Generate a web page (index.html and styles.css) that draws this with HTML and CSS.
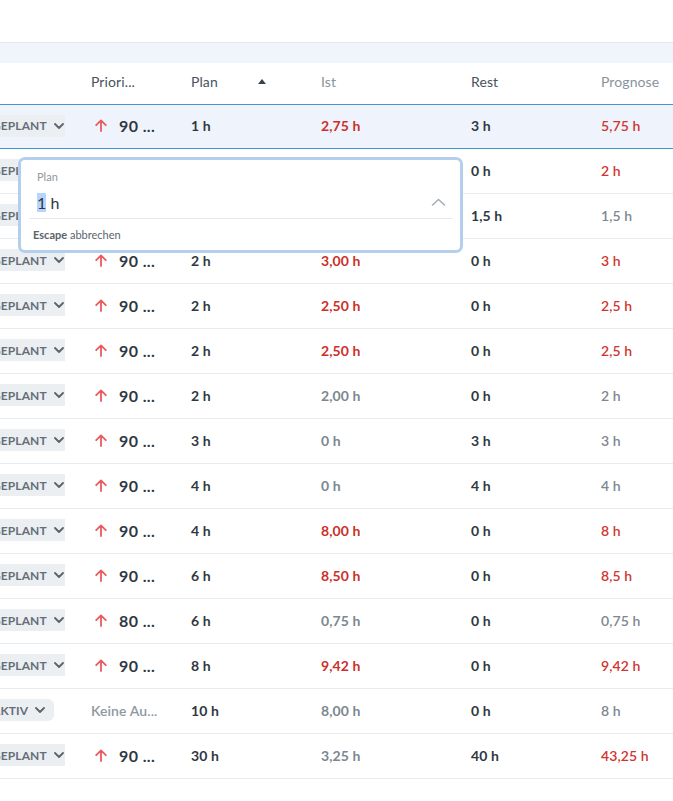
FILE: index.html
```html
<!DOCTYPE html>
<html lang="de">
<head>
<meta charset="utf-8">
<title>Tabelle</title>
<link rel="stylesheet" href="styles.css">
</head>
<body>
<div class="page">
  <div class="topbar"></div>
  <div class="band"></div>
  <div class="grid-wrap">
    <div class="grid">
      <div class="row head">
        <div class="cell status-h">Status</div>
        <div class="cell">Priori...</div>
        <div class="cell plan-h">Plan<svg class="sort" width="8" height="5" viewBox="0 0 8 5"><path d="M0 5 L4 0 L8 5 Z" fill="#3a434d"/></svg></div>
        <div class="cell light">Ist</div>
        <div class="cell">Rest</div>
        <div class="cell light">Prognose</div>
      </div>

      <div class="row sel">
        <div class="cell status"><span class="badge">GEPLANT<svg class="chev" width="10" height="6" viewBox="0 0 10 6"><path d="M1 1 L5 5 L9 1" fill="none" stroke="#59636d" stroke-width="1.8" stroke-linecap="round" stroke-linejoin="round"/></svg></span></div>
        <div class="cell prio"><svg class="up" width="12" height="13" viewBox="0 0 12 13"><path d="M6 12 V1.5 M1.2 6.2 L6 1.4 L10.8 6.2" fill="none" stroke="#ea5a5f" stroke-width="1.8" stroke-linecap="round" stroke-linejoin="round"/></svg><span class="pv">90 ...</span></div>
        <div class="cell">1 h</div>
        <div class="cell red">2,75 h</div>
        <div class="cell">3 h</div>
        <div class="cell pred">5,75 h</div>
      </div>

      <div class="row">
        <div class="cell status"><span class="badge">GEPLANT<svg class="chev" width="10" height="6" viewBox="0 0 10 6"><path d="M1 1 L5 5 L9 1" fill="none" stroke="#59636d" stroke-width="1.8" stroke-linecap="round" stroke-linejoin="round"/></svg></span></div>
        <div class="cell prio"><svg class="up" width="12" height="13" viewBox="0 0 12 13"><path d="M6 12 V1.5 M1.2 6.2 L6 1.4 L10.8 6.2" fill="none" stroke="#ea5a5f" stroke-width="1.8" stroke-linecap="round" stroke-linejoin="round"/></svg><span class="pv">90 ...</span></div>
        <div class="cell">2 h</div>
        <div class="cell red">2,00 h</div>
        <div class="cell">0 h</div>
        <div class="cell pred">2 h</div>
      </div>

      <div class="row">
        <div class="cell status"><span class="badge">GEPLANT<svg class="chev" width="10" height="6" viewBox="0 0 10 6"><path d="M1 1 L5 5 L9 1" fill="none" stroke="#59636d" stroke-width="1.8" stroke-linecap="round" stroke-linejoin="round"/></svg></span></div>
        <div class="cell prio"><svg class="up" width="12" height="13" viewBox="0 0 12 13"><path d="M6 12 V1.5 M1.2 6.2 L6 1.4 L10.8 6.2" fill="none" stroke="#ea5a5f" stroke-width="1.8" stroke-linecap="round" stroke-linejoin="round"/></svg><span class="pv">90 ...</span></div>
        <div class="cell">2 h</div>
        <div class="cell gray">0,50 h</div>
        <div class="cell">1,5 h</div>
        <div class="cell pgray">1,5 h</div>
      </div>

      <div class="row">
        <div class="cell status"><span class="badge">GEPLANT<svg class="chev" width="10" height="6" viewBox="0 0 10 6"><path d="M1 1 L5 5 L9 1" fill="none" stroke="#59636d" stroke-width="1.8" stroke-linecap="round" stroke-linejoin="round"/></svg></span></div>
        <div class="cell prio"><svg class="up" width="12" height="13" viewBox="0 0 12 13"><path d="M6 12 V1.5 M1.2 6.2 L6 1.4 L10.8 6.2" fill="none" stroke="#ea5a5f" stroke-width="1.8" stroke-linecap="round" stroke-linejoin="round"/></svg><span class="pv">90 ...</span></div>
        <div class="cell">2 h</div>
        <div class="cell red">3,00 h</div>
        <div class="cell">0 h</div>
        <div class="cell pred">3 h</div>
      </div>

      <div class="row">
        <div class="cell status"><span class="badge">GEPLANT<svg class="chev" width="10" height="6" viewBox="0 0 10 6"><path d="M1 1 L5 5 L9 1" fill="none" stroke="#59636d" stroke-width="1.8" stroke-linecap="round" stroke-linejoin="round"/></svg></span></div>
        <div class="cell prio"><svg class="up" width="12" height="13" viewBox="0 0 12 13"><path d="M6 12 V1.5 M1.2 6.2 L6 1.4 L10.8 6.2" fill="none" stroke="#ea5a5f" stroke-width="1.8" stroke-linecap="round" stroke-linejoin="round"/></svg><span class="pv">90 ...</span></div>
        <div class="cell">2 h</div>
        <div class="cell red">2,50 h</div>
        <div class="cell">0 h</div>
        <div class="cell pred">2,5 h</div>
      </div>

      <div class="row">
        <div class="cell status"><span class="badge">GEPLANT<svg class="chev" width="10" height="6" viewBox="0 0 10 6"><path d="M1 1 L5 5 L9 1" fill="none" stroke="#59636d" stroke-width="1.8" stroke-linecap="round" stroke-linejoin="round"/></svg></span></div>
        <div class="cell prio"><svg class="up" width="12" height="13" viewBox="0 0 12 13"><path d="M6 12 V1.5 M1.2 6.2 L6 1.4 L10.8 6.2" fill="none" stroke="#ea5a5f" stroke-width="1.8" stroke-linecap="round" stroke-linejoin="round"/></svg><span class="pv">90 ...</span></div>
        <div class="cell">2 h</div>
        <div class="cell red">2,50 h</div>
        <div class="cell">0 h</div>
        <div class="cell pred">2,5 h</div>
      </div>

      <div class="row">
        <div class="cell status"><span class="badge">GEPLANT<svg class="chev" width="10" height="6" viewBox="0 0 10 6"><path d="M1 1 L5 5 L9 1" fill="none" stroke="#59636d" stroke-width="1.8" stroke-linecap="round" stroke-linejoin="round"/></svg></span></div>
        <div class="cell prio"><svg class="up" width="12" height="13" viewBox="0 0 12 13"><path d="M6 12 V1.5 M1.2 6.2 L6 1.4 L10.8 6.2" fill="none" stroke="#ea5a5f" stroke-width="1.8" stroke-linecap="round" stroke-linejoin="round"/></svg><span class="pv">90 ...</span></div>
        <div class="cell">2 h</div>
        <div class="cell gray">2,00 h</div>
        <div class="cell">0 h</div>
        <div class="cell pgray">2 h</div>
      </div>

      <div class="row">
        <div class="cell status"><span class="badge">GEPLANT<svg class="chev" width="10" height="6" viewBox="0 0 10 6"><path d="M1 1 L5 5 L9 1" fill="none" stroke="#59636d" stroke-width="1.8" stroke-linecap="round" stroke-linejoin="round"/></svg></span></div>
        <div class="cell prio"><svg class="up" width="12" height="13" viewBox="0 0 12 13"><path d="M6 12 V1.5 M1.2 6.2 L6 1.4 L10.8 6.2" fill="none" stroke="#ea5a5f" stroke-width="1.8" stroke-linecap="round" stroke-linejoin="round"/></svg><span class="pv">90 ...</span></div>
        <div class="cell">3 h</div>
        <div class="cell gray">0 h</div>
        <div class="cell">3 h</div>
        <div class="cell pgray">3 h</div>
      </div>

      <div class="row">
        <div class="cell status"><span class="badge">GEPLANT<svg class="chev" width="10" height="6" viewBox="0 0 10 6"><path d="M1 1 L5 5 L9 1" fill="none" stroke="#59636d" stroke-width="1.8" stroke-linecap="round" stroke-linejoin="round"/></svg></span></div>
        <div class="cell prio"><svg class="up" width="12" height="13" viewBox="0 0 12 13"><path d="M6 12 V1.5 M1.2 6.2 L6 1.4 L10.8 6.2" fill="none" stroke="#ea5a5f" stroke-width="1.8" stroke-linecap="round" stroke-linejoin="round"/></svg><span class="pv">90 ...</span></div>
        <div class="cell">4 h</div>
        <div class="cell gray">0 h</div>
        <div class="cell">4 h</div>
        <div class="cell pgray">4 h</div>
      </div>

      <div class="row">
        <div class="cell status"><span class="badge">GEPLANT<svg class="chev" width="10" height="6" viewBox="0 0 10 6"><path d="M1 1 L5 5 L9 1" fill="none" stroke="#59636d" stroke-width="1.8" stroke-linecap="round" stroke-linejoin="round"/></svg></span></div>
        <div class="cell prio"><svg class="up" width="12" height="13" viewBox="0 0 12 13"><path d="M6 12 V1.5 M1.2 6.2 L6 1.4 L10.8 6.2" fill="none" stroke="#ea5a5f" stroke-width="1.8" stroke-linecap="round" stroke-linejoin="round"/></svg><span class="pv">90 ...</span></div>
        <div class="cell">4 h</div>
        <div class="cell red">8,00 h</div>
        <div class="cell">0 h</div>
        <div class="cell pred">8 h</div>
      </div>

      <div class="row">
        <div class="cell status"><span class="badge">GEPLANT<svg class="chev" width="10" height="6" viewBox="0 0 10 6"><path d="M1 1 L5 5 L9 1" fill="none" stroke="#59636d" stroke-width="1.8" stroke-linecap="round" stroke-linejoin="round"/></svg></span></div>
        <div class="cell prio"><svg class="up" width="12" height="13" viewBox="0 0 12 13"><path d="M6 12 V1.5 M1.2 6.2 L6 1.4 L10.8 6.2" fill="none" stroke="#ea5a5f" stroke-width="1.8" stroke-linecap="round" stroke-linejoin="round"/></svg><span class="pv">90 ...</span></div>
        <div class="cell">6 h</div>
        <div class="cell red">8,50 h</div>
        <div class="cell">0 h</div>
        <div class="cell pred">8,5 h</div>
      </div>

      <div class="row">
        <div class="cell status"><span class="badge">GEPLANT<svg class="chev" width="10" height="6" viewBox="0 0 10 6"><path d="M1 1 L5 5 L9 1" fill="none" stroke="#59636d" stroke-width="1.8" stroke-linecap="round" stroke-linejoin="round"/></svg></span></div>
        <div class="cell prio"><svg class="up" width="12" height="13" viewBox="0 0 12 13"><path d="M6 12 V1.5 M1.2 6.2 L6 1.4 L10.8 6.2" fill="none" stroke="#ea5a5f" stroke-width="1.8" stroke-linecap="round" stroke-linejoin="round"/></svg><span class="pv">80 ...</span></div>
        <div class="cell">6 h</div>
        <div class="cell gray">0,75 h</div>
        <div class="cell">0 h</div>
        <div class="cell pgray">0,75 h</div>
      </div>

      <div class="row">
        <div class="cell status"><span class="badge">GEPLANT<svg class="chev" width="10" height="6" viewBox="0 0 10 6"><path d="M1 1 L5 5 L9 1" fill="none" stroke="#59636d" stroke-width="1.8" stroke-linecap="round" stroke-linejoin="round"/></svg></span></div>
        <div class="cell prio"><svg class="up" width="12" height="13" viewBox="0 0 12 13"><path d="M6 12 V1.5 M1.2 6.2 L6 1.4 L10.8 6.2" fill="none" stroke="#ea5a5f" stroke-width="1.8" stroke-linecap="round" stroke-linejoin="round"/></svg><span class="pv">90 ...</span></div>
        <div class="cell">8 h</div>
        <div class="cell red">9,42 h</div>
        <div class="cell">0 h</div>
        <div class="cell pred">9,42 h</div>
      </div>

      <div class="row">
        <div class="cell status"><span class="badge round">AKTIV<svg class="chev" width="10" height="6" viewBox="0 0 10 6"><path d="M1 1 L5 5 L9 1" fill="none" stroke="#59636d" stroke-width="1.8" stroke-linecap="round" stroke-linejoin="round"/></svg></span></div>
        <div class="cell prio"><span class="none">Keine Au...</span></div>
        <div class="cell">10 h</div>
        <div class="cell gray">8,00 h</div>
        <div class="cell">0 h</div>
        <div class="cell pgray">8 h</div>
      </div>

      <div class="row">
        <div class="cell status"><span class="badge">GEPLANT<svg class="chev" width="10" height="6" viewBox="0 0 10 6"><path d="M1 1 L5 5 L9 1" fill="none" stroke="#59636d" stroke-width="1.8" stroke-linecap="round" stroke-linejoin="round"/></svg></span></div>
        <div class="cell prio"><svg class="up" width="12" height="13" viewBox="0 0 12 13"><path d="M6 12 V1.5 M1.2 6.2 L6 1.4 L10.8 6.2" fill="none" stroke="#ea5a5f" stroke-width="1.8" stroke-linecap="round" stroke-linejoin="round"/></svg><span class="pv">90 ...</span></div>
        <div class="cell">30 h</div>
        <div class="cell gray">3,25 h</div>
        <div class="cell">40 h</div>
        <div class="cell pred">43,25 h</div>
      </div>
    </div>

    <div class="popup">
      <div class="field">
        <div class="label">Plan</div>
        <div class="input"><span class="value"><span class="selected">1</span> h</span><svg class="chev-up" width="15" height="8" viewBox="0 0 15 8"><path d="M1.5 7 L7.5 1.5 L13.5 7" fill="none" stroke="#a3abb3" stroke-width="1.5" stroke-linecap="round" stroke-linejoin="round"/></svg></div>
      </div>
      <div class="divider"></div>
      <div class="hint"><b>Escape</b> abbrechen</div>
    </div>
  </div>
</div>
</body>
</html>
```

FILE: styles.css
```css
* { box-sizing: border-box; }
html, body { margin: 0; padding: 0; background: #fff; }
body {
  font-family: Lato, "Open Sans", "Liberation Sans", sans-serif;
  color: #2f3842;
  width: 673px;
  height: 801px;
  overflow: hidden;
}
.page { width: 673px; overflow: hidden; }
.topbar { height: 43px; border-bottom: 1px solid #e4e7eb; }
.band { height: 20px; background: #f0f4fb; }
.grid-wrap { position: relative; }
.grid { margin-left: -67px; }
.row {
  display: grid;
  grid-template-columns: 150px 100px 130px 150px 130px 130px;
  height: 45px;
  padding-bottom: 2px;
  border-bottom: 1px solid #e9ecef;
  align-items: center;
  font-size: 14px;
  font-weight: 700;
  letter-spacing: 0.1px;
}
.row.head {
  height: 41px;
  padding-bottom: 4px;
  border-bottom: none;
  font-weight: 400;
  color: #4a535d;
}
.row.sel {
  background: #eff4fc;
  border-top: 1px solid #3c98d2;
  border-bottom: 1px solid #3c98d2;
}
.cell {
  padding-left: 8px;
  white-space: nowrap;
  display: flex;
  align-items: center;
}
.cell.status { overflow: hidden; }
.cell.light { color: #8a939c; }
.status-h { padding-left: 28px; }
.plan-h .sort { margin-left: auto; margin-right: 47px; }
.red { color: #cc2f2b; }
.pred { color: #d0352f; font-weight: 600; }
.gray { color: #7c8791; }
.pgray { color: #7c8791; font-weight: 600; }
.badge {
  display: inline-flex;
  align-items: center;
  flex: none;
  margin-left: 43px;
  height: 22px;
  padding: 0 1px 0 8px;
  background: #eceff2;
  color: #656e78;
  font-size: 12px;
  font-weight: 700;
  border-radius: 3px 0 0 3px;
}
.badge.round { border-radius: 6px; padding-right: 9px; }
.badge .chev { margin-left: 7px; }
.prio .up { margin-left: 4px; }
.pv { margin-left: 12px; font-size: 16px; font-weight: 700; letter-spacing: 0.4px; }
.none { color: #8f98a1; font-weight: 600; }

.popup {
  position: absolute;
  left: 18px;
  top: 94px;
  width: 445px;
  height: 96px;
  background: #fff;
  border: 3px solid #b4cfee;
  border-radius: 7px;
}
.field { padding: 10px 14px 4px 16px; }
.label { font-size: 11px; line-height: 14px; color: #8f98a1; }
.input {
  margin-top: 6px;
  height: 24px;
  display: flex;
  align-items: center;
  justify-content: space-between;
  font-size: 16px;
  color: #2f3842;
}
.selected { background: #b4d5fe; }
.divider { height: 1px; background: #e6e9ec; margin: 0 8px; }
.hint { padding: 9px 12px 0; font-size: 11px; line-height: 14px; color: #59636d; }
.hint b { font-weight: 700; }
```
